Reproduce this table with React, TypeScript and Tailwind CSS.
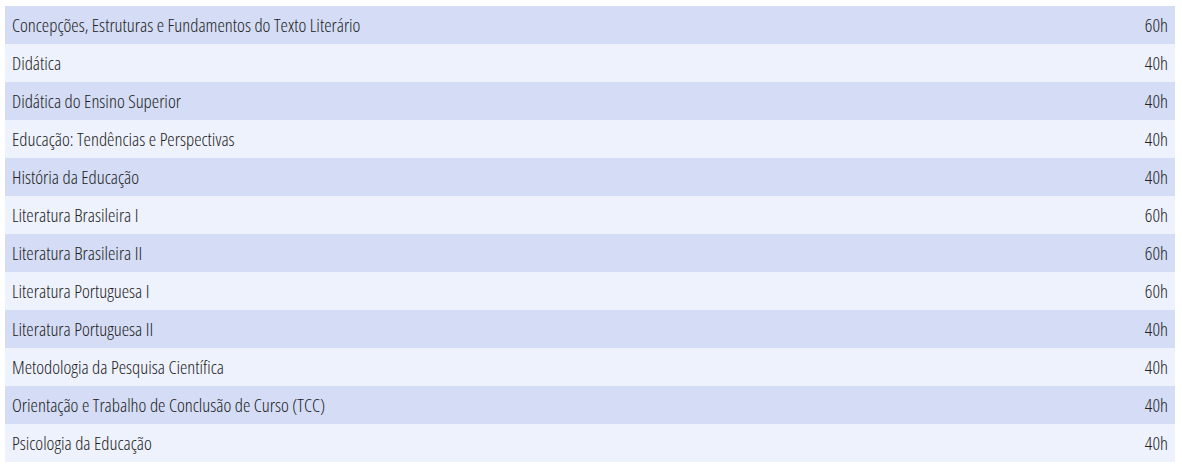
const disciplinas = [
  { nome: "Concepções, Estruturas e Fundamentos do Texto Literário", carga: "60h" },
  { nome: "Didática", carga: "40h" },
  { nome: "Didática do Ensino Superior", carga: "40h" },
  { nome: "Educação: Tendências e Perspectivas", carga: "40h" },
  { nome: "História da Educação", carga: "40h" },
  { nome: "Literatura Brasileira I", carga: "60h" },
  { nome: "Literatura Brasileira II", carga: "60h" },
  { nome: "Literatura Portuguesa I", carga: "60h" },
  { nome: "Literatura Portuguesa II", carga: "40h" },
  { nome: "Metodologia da Pesquisa Científica", carga: "40h" },
  { nome: "Orientação e Trabalho de Conclusão de Curso (TCC)", carga: "40h" },
  { nome: "Psicologia da Educação", carga: "40h" },
];

export default function App() {
  return (
    <div className="bg-white pt-[6px] pl-[5px] pr-[7px] font-['Open_Sans',sans-serif] font-stretch-condensed font-light">
      <table className="w-full border-collapse text-[18.7px] text-[#222]">
        <tbody>
          {disciplinas.map((d, i) => (
            <tr
              key={d.nome}
              className={i % 2 === 0 ? "bg-[#d4ddf5]" : "bg-[#eef2fd]"}
            >
              <td className="h-[38px] pl-[7px] align-middle">{d.nome}</td>
              <td className="h-[38px] pr-[7px] text-right align-middle">
                {d.carga}
              </td>
            </tr>
          ))}
        </tbody>
      </table>
    </div>
  );
}
